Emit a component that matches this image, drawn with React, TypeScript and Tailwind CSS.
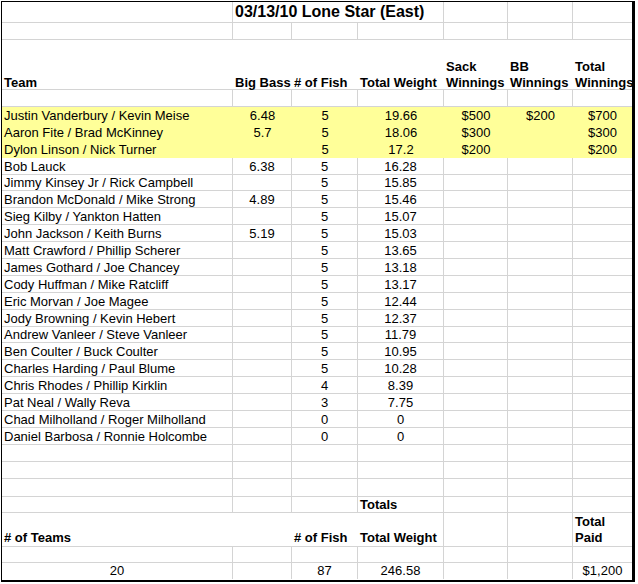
import type { ReactNode } from 'react';

type Team = {
  name: string;
  bass?: string;
  fish: string;
  weight: string;
  sack?: string;
  bb?: string;
  total?: string;
};

const teams: Team[] = [
  { name: 'Justin Vanderbury / Kevin Meise', bass: '6.48', fish: '5', weight: '19.66', sack: '$500', bb: '$200', total: '$700' },
  { name: 'Aaron Fite / Brad McKinney', bass: '5.7', fish: '5', weight: '18.06', sack: '$300', total: '$300' },
  { name: 'Dylon Linson / Nick Turner', fish: '5', weight: '17.2', sack: '$200', total: '$200' },
  { name: 'Bob Lauck', bass: '6.38', fish: '5', weight: '16.28' },
  { name: 'Jimmy Kinsey Jr / Rick Campbell', fish: '5', weight: '15.85' },
  { name: 'Brandon McDonald / Mike Strong', bass: '4.89', fish: '5', weight: '15.46' },
  { name: 'Sieg Kilby / Yankton Hatten', fish: '5', weight: '15.07' },
  { name: 'John Jackson / Keith Burns', bass: '5.19', fish: '5', weight: '15.03' },
  { name: 'Matt Crawford / Phillip Scherer', fish: '5', weight: '13.65' },
  { name: 'James Gothard / Joe Chancey', fish: '5', weight: '13.18' },
  { name: 'Cody Huffman / Mike Ratcliff', fish: '5', weight: '13.17' },
  { name: 'Eric Morvan / Joe Magee', fish: '5', weight: '12.44' },
  { name: 'Jody Browning / Kevin Hebert', fish: '5', weight: '12.37' },
  { name: 'Andrew Vanleer / Steve Vanleer', fish: '5', weight: '11.79' },
  { name: 'Ben Coulter / Buck Coulter', fish: '5', weight: '10.95' },
  { name: 'Charles Harding / Paul Blume', fish: '5', weight: '10.28' },
  { name: 'Chris Rhodes / Phillip Kirklin', fish: '4', weight: '8.39' },
  { name: 'Pat Neal / Wally Reva', fish: '3', weight: '7.75' },
  { name: 'Chad Milholland / Roger Milholland', fish: '0', weight: '0' },
  { name: 'Daniel Barbosa / Ronnie Holcombe', fish: '0', weight: '0' },
];

const GRID = 'grid grid-cols-[231px_59px_66px_86px_64px_65px_59px]';

// one spreadsheet cell; `line` draws the gridline on its right edge
function C({
  children,
  center,
  line = true,
  className = '',
}: {
  children?: ReactNode;
  center?: boolean;
  line?: boolean;
  className?: string;
}) {
  return (
    <div
      className={`flex flex-col justify-end whitespace-nowrap px-[2px] ${center ? 'items-center' : 'items-start'} ${line ? 'border-r border-[#d4d4d4]' : ''} ${className}`}
    >
      {children}
    </div>
  );
}

function EmptyRow({ h = 'h-[17px]' }: { h?: string }) {
  return (
    <div className={`${GRID} ${h} border-b border-[#d4d4d4]`}>
      <C />
      <C />
      <C />
      <C />
      <C />
      <C />
      <C line={false} />
    </div>
  );
}

export default function App() {
  return (
    <div className="w-[638px] h-[584px] bg-white font-['Liberation_Sans',Arial,sans-serif] text-[13px] leading-[13px] text-black">
      <div className="ml-[1px] mt-[1px] w-[634px] h-[581px] overflow-hidden border-l border-t border-r-[3px] border-b-[2px] border-black">
        {/* title */}
        <div className={`${GRID} h-[21px] border-b border-[#d4d4d4]`}>
          <C />
          <C line={false} className="pb-[2px]">
            <span className="text-[16px] leading-[16px] font-bold">03/13/10 Lone Star (East)</span>
          </C>
          <C line={false} />
          <C />
          <C />
          <C />
          <C line={false} />
        </div>
        <EmptyRow />

        {/* header */}
        <div className={`${GRID} h-[50px] border-b border-[#d4d4d4] font-bold`}>
          <C line={false}>Team</C>
          <C line={false}>Big Bass</C>
          <C line={false}># of Fish</C>
          <C line={false}>Total Weight</C>
          <C line={false}>
            <div className="mb-[3px]">Sack</div>
            <div>Winnings</div>
          </C>
          <C line={false}>
            <div className="mb-[3px]">BB</div>
            <div>Winnings</div>
          </C>
          <C line={false}>
            <div className="mb-[3px]">Total</div>
            <div>Winnings</div>
          </C>
        </div>
        <EmptyRow />

        {teams.map((t, i) => {
          const hi = i < 3;
          const pad = hi ? 'pb-[2px]' : 'pb-[1px]';
          return (
            <div
              key={t.name}
              className={`${GRID} h-[16.9px] ${hi ? 'bg-[#ffff99]' : 'border-b border-[#d4d4d4]'}`}
            >
              <C line={!hi} className={pad}>{t.name}</C>
              <C line={!hi} center className={pad}>{t.bass}</C>
              <C line={!hi} center className={pad}>{t.fish}</C>
              <C line={!hi} center className={pad}>{t.weight}</C>
              <C line={!hi} center className={pad}>{t.sack}</C>
              <C line={!hi} center className={pad}>{t.bb}</C>
              <C line={false} center className={pad}>{t.total}</C>
            </div>
          );
        })}

        <EmptyRow />
        <EmptyRow />
        <EmptyRow h="h-[17.7px]" />

        {/* totals */}
        <div className={`${GRID} h-[16px] border-b border-[#d4d4d4] font-bold`}>
          <C />
          <C />
          <C />
          <C className="pb-[1px]">Totals</C>
          <C />
          <C />
          <C line={false} />
        </div>
        <div className={`${GRID} h-[34px] border-b border-[#d4d4d4] font-bold`}>
          <C line={false} className="pb-[2px]"># of Teams</C>
          <C line={false} />
          <C line={false} className="pb-[2px]"># of Fish</C>
          <C className="pb-[2px]">Total Weight</C>
          <C />
          <C />
          <C line={false} className="pb-[2px]">
            <div className="mb-[3px]">Total</div>
            <div>Paid</div>
          </C>
        </div>
        <EmptyRow h="h-[16.6px]" />
        <div className={`${GRID} h-[16.4px]`}>
          <C center className="pb-[2px]">20</C>
          <C />
          <C center className="pb-[2px]">87</C>
          <C center className="pb-[2px]">246.58</C>
          <C />
          <C />
          <C line={false} center className="pb-[2px]">$1,200</C>
        </div>
      </div>
    </div>
  );
}
